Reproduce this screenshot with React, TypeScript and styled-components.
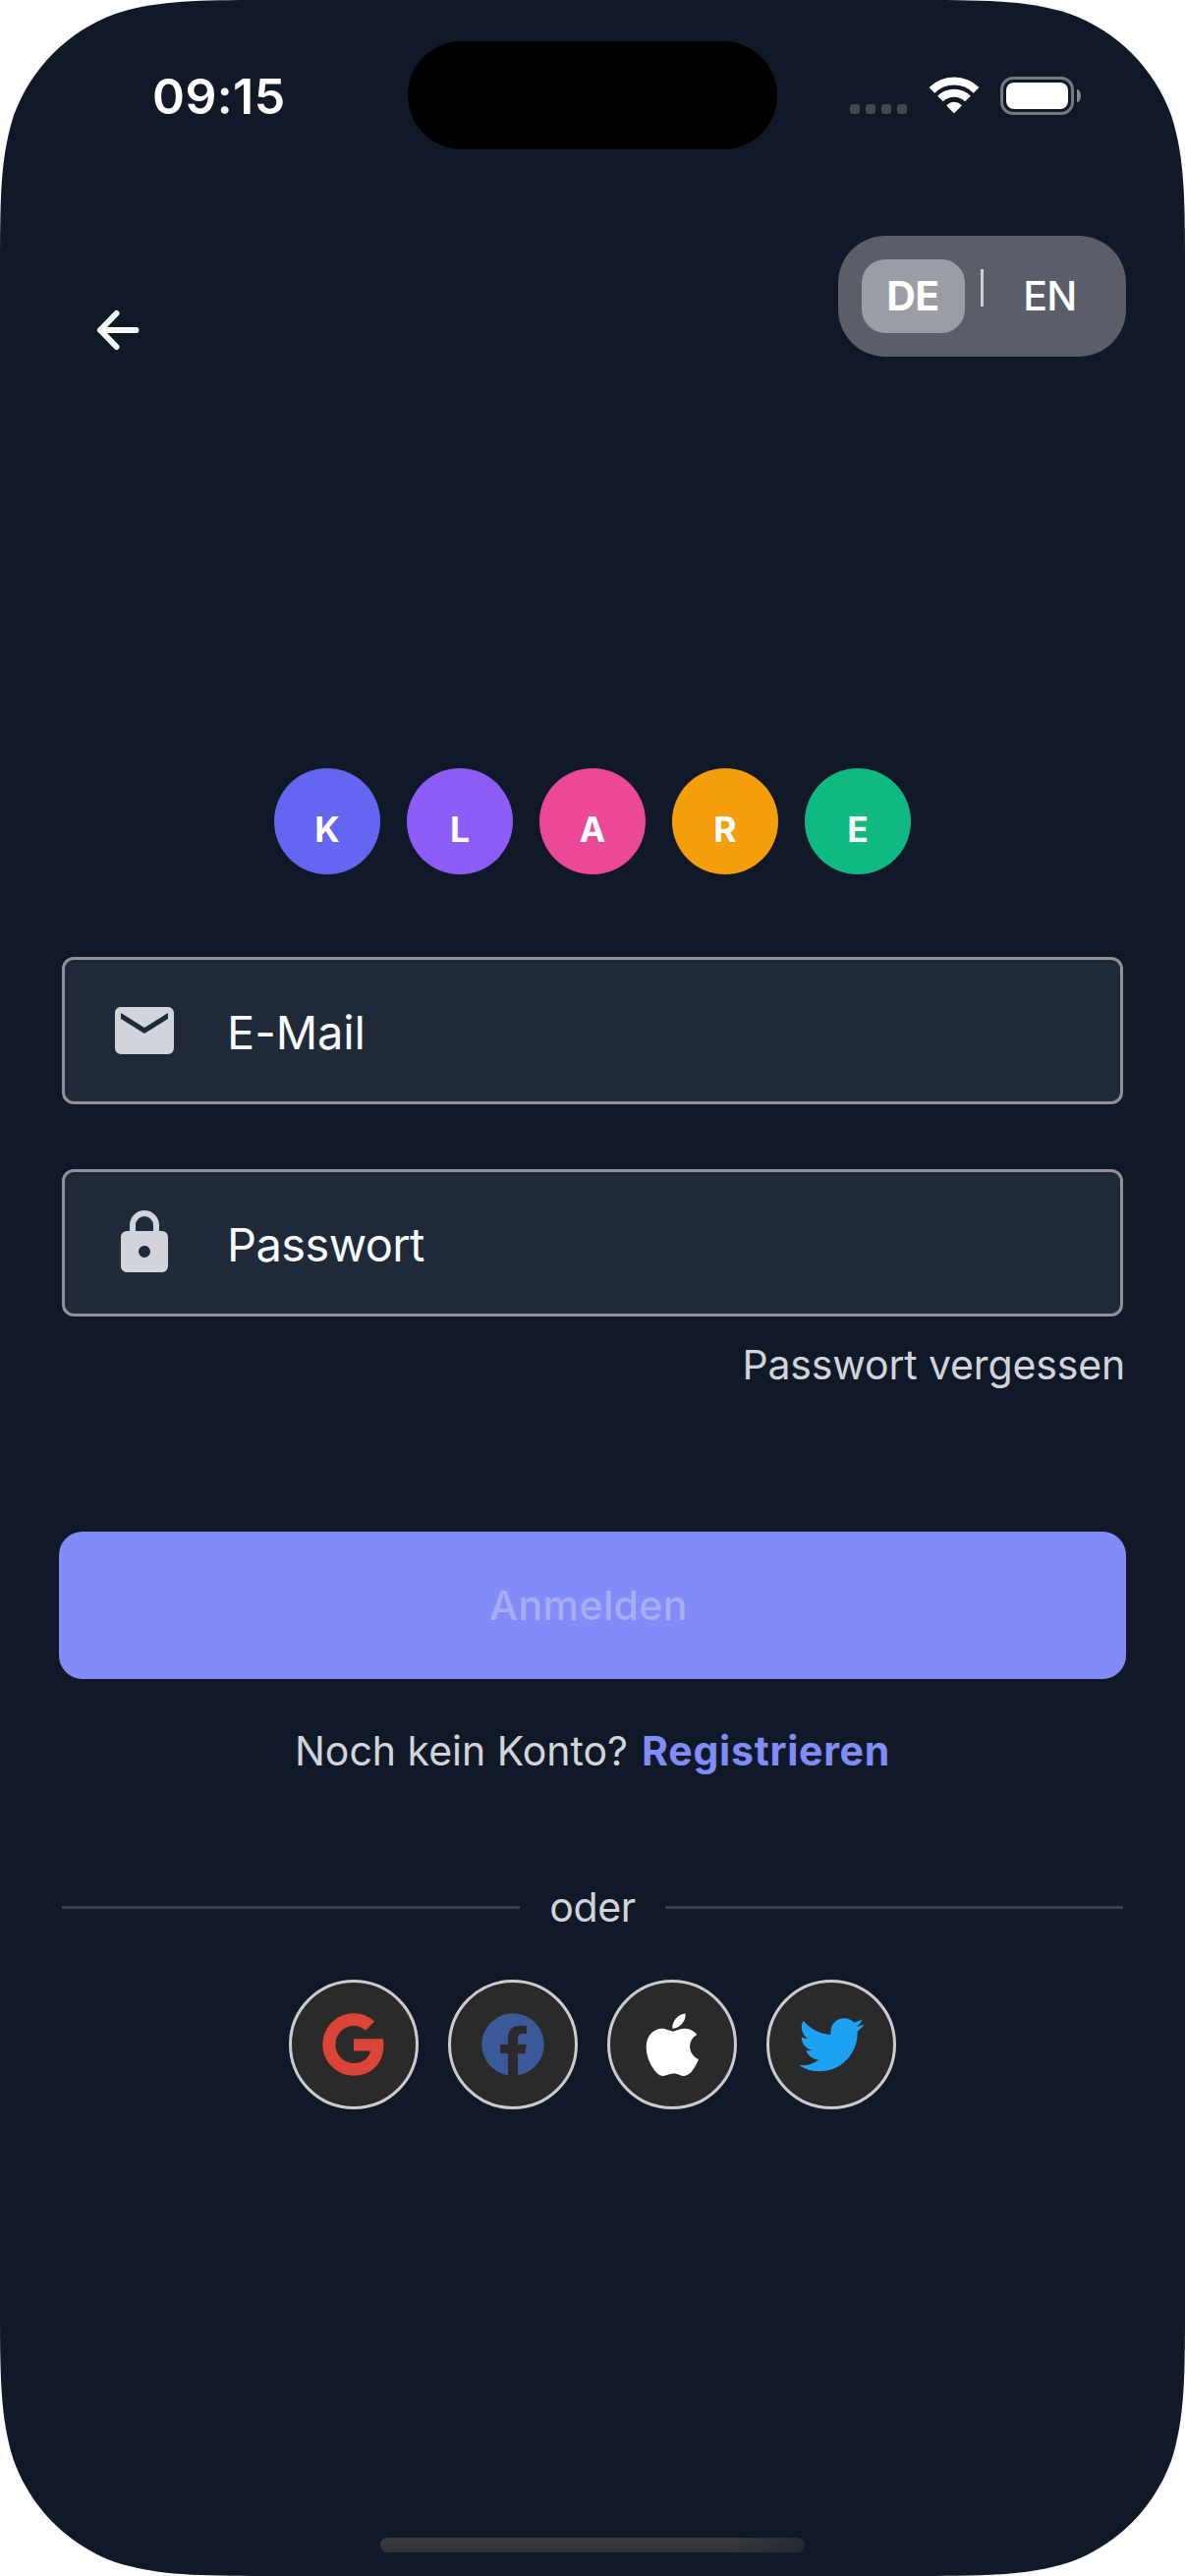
import React from "react";
import styled, { createGlobalStyle } from "styled-components";
import { FaApple, FaTwitter } from "react-icons/fa";
import { RiFacebookCircleFill, RiGoogleFill } from "react-icons/ri";

/* Continuous ("squircle") rounded rectangle outline, as used for device screens. */
const squircle = (w: number, h: number, r: number) => {
  const a = 1.52866498 * r;
  const b = 1.08849296 * r;
  const c = 0.86840694 * r;
  const d = 0.63149379 * r;
  const e = 0.37282383 * r;
  const f = 0.16905956 * r;
  const g = 0.07491139 * r;
  return [
    `M${a} 0H${w - a}`,
    `C${w - b} 0 ${w - c} 0 ${w - d} ${g}C${w - e} ${f} ${w - f} ${e} ${w - g} ${d}C${w} ${c} ${w} ${b} ${w} ${a}`,
    `V${h - a}`,
    `C${w} ${h - b} ${w} ${h - c} ${w - g} ${h - d}C${w - f} ${h - e} ${w - e} ${h - f} ${w - d} ${h - g}C${w - c} ${h} ${w - b} ${h} ${w - a} ${h}`,
    `H${a}`,
    `C${b} ${h} ${c} ${h} ${d} ${h - g}C${e} ${h - f} ${f} ${h - e} ${g} ${h - d}C0 ${h - c} 0 ${h - b} 0 ${h - a}`,
    `V${a}`,
    `C0 ${b} 0 ${c} ${g} ${d}C${f} ${e} ${e} ${f} ${d} ${g}C${c} 0 ${b} 0 ${a} 0Z`,
  ].join("");
};

const GlobalStyle = createGlobalStyle`
  * { box-sizing: border-box; }
  body { margin: 0; background: #ffffff; }
`;

const Screen = styled.div`
  display: flex;
  flex-direction: column;
  width: 1206px;
  height: 2622px;
  background: #111827;
  clip-path: path("${squircle(1206, 2622, 186)}");
  font-family: Inter, "Liberation Sans", sans-serif;
  font-size: 41px;
  line-height: 60px;
  color: #d1d5db;
`;

const StatusBar = styled.header`
  display: grid;
  grid-template-columns: 415px 376px 1fr;
  align-items: center;
  height: 194px;
  flex: none;
`;

const Clock = styled.time`
  padding: 2px 0 0 155px;
  font-size: 50px;
  font-weight: 600;
  letter-spacing: 0.4px;
  color: #ffffff;
  white-space: nowrap;
`;

const Island = styled.div`
  height: 110px;
  border-radius: 55px;
  background: #000000;
`;

const Indicators = styled.div`
  display: flex;
  align-items: center;
  padding-left: 74px;
`;

const Signal = styled.div`
  display: flex;
  gap: 6px;
  margin: 28px 22px 0 0;
`;

const SignalDot = styled.i`
  width: 10px;
  height: 10px;
  border-radius: 3px;
  background: #454852;
`;

const WifiIcon = styled.svg`
  display: block;
  width: 52px;
  height: 38px;
  margin-right: 21px;
`;

const Battery = styled.div`
  display: flex;
  width: 75px;
  height: 39px;
  padding: 3px;
  border: 3px solid #747881;
  border-radius: 13px;
`;

const BatteryLevel = styled.div`
  flex: 1;
  border-radius: 8px;
  background: #ffffff;
`;

const BatteryCap = styled.div`
  width: 4px;
  height: 13px;
  margin-left: 3px;
  border-radius: 0 4px 4px 0 / 0 7px 7px 0;
  background: #858890;
`;

const TopBar = styled.nav`
  display: flex;
  justify-content: space-between;
  align-items: flex-start;
  height: 588px;
  flex: none;
  padding: 46px 60px 0 84px;
`;

const BackButton = styled.button`
  display: flex;
  margin: 60px 0 0;
  padding: 0;
  border: 0;
  background: none;
  color: #f9fafb;
`;

const LanguageSwitch = styled.div`
  display: flex;
  height: 123px;
  padding: 24px;
  border-radius: 48px;
  background: #5b5e69;
`;

const Language = styled.button<{ $active?: boolean }>`
  width: ${(p) => (p.$active ? 105 : 104)}px;
  height: 75px;
  padding: 0 ${(p) => (p.$active ? 1 : 3)}px 2px 0;
  border: 0;
  border-radius: 24px;
  background: ${(p) => (p.$active ? "#9b9da5" : "transparent")};
  font: inherit;
  font-weight: ${(p) => (p.$active ? 700 : 500)};
  letter-spacing: -0.6px;
  color: #ffffff;
`;

const LanguageDivider = styled.div`
  width: 3px;
  height: 38px;
  margin: 10px 17px 0 16px;
  background: #cdcfd2;
`;

const Logo = styled.div`
  display: flex;
  justify-content: center;
  gap: 27px;
`;

const LogoLetter = styled.span<{ $color: string }>`
  display: flex;
  justify-content: center;
  align-items: center;
  width: 108px;
  height: 108px;
  padding-top: 17px;
  border-radius: 50%;
  background: ${(p) => p.$color};
  font-size: 35.5px;
  font-weight: 700;
  color: #ffffff;
`;

const Form = styled.form`
  display: flex;
  flex-direction: column;
  padding: 84px 60px 0;
`;

const Field = styled.label`
  display: flex;
  align-items: center;
  gap: 48px;
  height: 150px;
  margin: 0 3px 66px;
  padding-left: 45px;
  border: 3px solid #938f99;
  border-radius: 12px;
  background: #1f2937;
`;

const FieldLabel = styled.span<{ $tracking: number }>`
  padding-top: 4px;
  font-size: 47px;
  letter-spacing: ${(p) => p.$tracking}px;
  color: #f9fafb;
`;

const ForgotLink = styled.a`
  align-self: flex-end;
  margin: -47px 0 0;
  padding: 0 1px 140px 0;
  letter-spacing: -0.15px;
`;

const SubmitButton = styled.button`
  height: 150px;
  padding: 0 8px 0 0;
  border: 0;
  border-radius: 24px;
  background: #818cf8;
  font: inherit;
  font-weight: 500;
  letter-spacing: 0.4px;
  color: #a6adf0;
`;

const RegisterLine = styled.p`
  display: flex;
  justify-content: center;
  gap: 14px;
  margin: 43px 0 0;
`;

const RegisterLink = styled.a`
  font-weight: 700;
  letter-spacing: 0.75px;
  color: #818cf8;
`;

const Separator = styled.div`
  display: flex;
  align-items: center;
  gap: 30px;
  margin: 99px 3px 0;
  letter-spacing: -0.4px;
`;

const Rule = styled.i`
  flex: 1;
  height: 3px;
  background: #374151;
`;

const SocialRow = styled.div`
  display: flex;
  justify-content: center;
  gap: 30px;
  margin-top: 44px;
`;

const SocialButton = styled.button<{ $color: string; $size: number }>`
  display: flex;
  justify-content: center;
  align-items: center;
  width: 132px;
  height: 132px;
  padding: 0;
  border: 3px solid #cccccc;
  border-radius: 50%;
  background: #2a2a2a;
  font-size: ${(p) => p.$size}px;
  color: ${(p) => p.$color};
`;

const HomeIndicator = styled.div`
  width: 432px;
  height: 15px;
  margin: auto auto 24px;
  border-radius: 8px;
  background: linear-gradient(90deg, transparent 82%, rgba(30, 37, 48, 0.75)),
    linear-gradient(#3b3c40, #303339);
`;

const letters = [
  { letter: "K", color: "#6366f1" },
  { letter: "L", color: "#8b5cf6" },
  { letter: "A", color: "#ec4899" },
  { letter: "R", color: "#f59e0b" },
  { letter: "E", color: "#10b981" },
];

const providers = [
  { name: "Google", color: "#db4437", size: 76, Icon: RiGoogleFill },
  { name: "Facebook", color: "#3b5998", size: 76, Icon: RiFacebookCircleFill },
  { name: "Apple", color: "#ffffff", size: 72.5, Icon: FaApple },
  { name: "Twitter", color: "#1da1f2", size: 66.5, Icon: FaTwitter },
];

const fields = [
  {
    label: "E-Mail",
    tracking: -0.1,
    icon: "M20 8l-8 5-8-5V6l8 5 8-5m0-2H4c-1.11 0-2 .89-2 2v12a2 2 0 002 2h16a2 2 0 002-2V6c0-1.11-.9-2-2-2z",
  },
  {
    label: "Passwort",
    tracking: -0.6,
    icon: "M12 17a2 2 0 002-2c0-1.11-.9-2-2-2a2 2 0 00-2 2 2 2 0 002 2m6-9a2 2 0 012 2v10a2 2 0 01-2 2H6a2 2 0 01-2-2V10a2 2 0 012-2h1V6a5 5 0 0110 0v2h1m-6-5a3 3 0 00-3 3v2h6V6a3 3 0 00-3-3z",
  },
];

export default function App() {
  return (
    <>
      <GlobalStyle />
      <Screen>
        <StatusBar>
          <Clock>09:15</Clock>
          <Island />
          <Indicators>
            <Signal>
              <SignalDot />
              <SignalDot />
              <SignalDot />
              <SignalDot />
            </Signal>
            <WifiIcon viewBox="0 0 52 38" fill="none" stroke="#ffffff">
              <path d="M3.4 13.9A32 32 0 0 1 48.6 13.9" strokeWidth="8" />
              <path d="M12 22.5A19.8 19.8 0 0 1 40 22.5" strokeWidth="8" />
              <path
                d="M19.4 29.4A9.5 9.5 0 0 1 32.6 29.4L26 36Z"
                fill="#ffffff"
                strokeWidth="2"
                strokeLinejoin="round"
              />
            </WifiIcon>
            <Battery>
              <BatteryLevel />
            </Battery>
            <BatteryCap />
          </Indicators>
        </StatusBar>

        <TopBar>
          <BackButton aria-label="Zurück">
            <svg
              width="72"
              height="72"
              viewBox="0 0 72 72"
              fill="none"
              stroke="currentColor"
              strokeWidth="6"
              strokeLinecap="round"
              strokeLinejoin="round"
            >
              <path d="M54.5 36H18M34.5 19L18 36L34.5 53" />
            </svg>
          </BackButton>
          <LanguageSwitch>
            <Language $active>DE</Language>
            <LanguageDivider />
            <Language>EN</Language>
          </LanguageSwitch>
        </TopBar>

        <Logo>
          {letters.map(({ letter, color }) => (
            <LogoLetter key={letter} $color={color}>
              {letter}
            </LogoLetter>
          ))}
        </Logo>

        <Form>
          {fields.map(({ label, tracking, icon }) => (
            <Field key={label}>
              <svg width="72" height="72" viewBox="0 0 24 24" fill="#d1d5db">
                <path d={icon} />
              </svg>
              <FieldLabel $tracking={tracking}>{label}</FieldLabel>
            </Field>
          ))}
          <ForgotLink>Passwort vergessen</ForgotLink>
          <SubmitButton type="button">Anmelden</SubmitButton>
          <RegisterLine>
            <span>Noch kein Konto?</span>
            <RegisterLink>Registrieren</RegisterLink>
          </RegisterLine>
          <Separator>
            <Rule />
            <span>oder</span>
            <Rule />
          </Separator>
          <SocialRow>
            {providers.map(({ name, color, size, Icon }) => (
              <SocialButton
                key={name}
                type="button"
                aria-label={name}
                $color={color}
                $size={size}
              >
                <Icon />
              </SocialButton>
            ))}
          </SocialRow>
        </Form>

        <HomeIndicator />
      </Screen>
    </>
  );
}
